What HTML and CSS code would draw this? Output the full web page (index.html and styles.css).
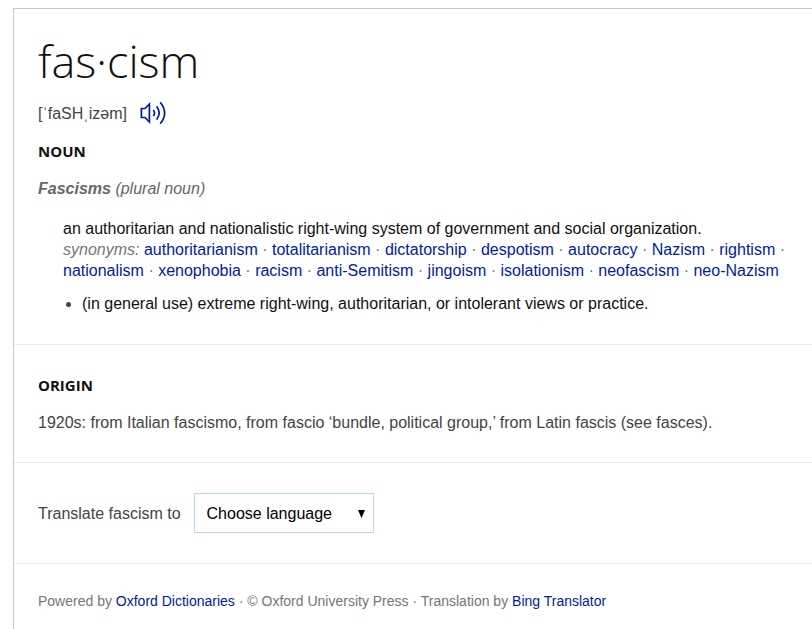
FILE: index.html
```
<!DOCTYPE html>
<html lang="en">
<head>
  <meta charset="UTF-8">
  <meta name="viewport" content="width=device-width, initial-scale=1.0">
  <title>fascism - definition</title>
  <link rel="stylesheet" href="styles.css">
</head>
<body>
  <main class="card">
    <section class="entry">
      <h1 class="word">fas·cism</h1>
      <div class="pronunciation">
        <span>[ˈfaSHˌizəm]</span>
        <button type="button" class="audio-btn" aria-label="Listen">
          <svg width="26" height="24" viewBox="0 0 26 24" fill="none" stroke="#001ba0" stroke-width="1.7">
            <path d="M1.4 7.5H5L9.4 3V21L5 16.5H1.4Z"/>
            <path d="M13.3 9Q15.7 12 13.3 15"/>
            <path d="M16.6 5.4Q21.8 12 16.6 18.6"/>
            <path d="M20.2 1.2Q29 12 20.2 22.8"/>
          </svg>
        </button>
      </div>
      <h2 class="label">NOUN</h2>
      <p class="forms"><strong>Fascisms</strong> (plural noun)</p>
      <div class="definition">
        <p>an authoritarian and nationalistic right-wing system of government and social organization.</p>
        <p class="synonyms"><em>synonyms:</em> <a href="#">authoritarianism</a> · <a href="#">totalitarianism</a> · <a href="#">dictatorship</a> · <a href="#">despotism</a> · <a href="#">autocracy</a> · <a href="#">Nazism</a> · <a href="#">rightism</a> · <a href="#">nationalism</a> · <a href="#">xenophobia</a> · <a href="#">racism</a> · <a href="#">anti-Semitism</a> · <a href="#">jingoism</a> · <a href="#">isolationism</a> · <a href="#">neofascism</a> · <a href="#">neo-Nazism</a></p>
        <ul class="senses">
          <li>(in general use) extreme right-wing, authoritarian, or intolerant views or practice.</li>
        </ul>
      </div>
    </section>

    <section class="origin">
      <h2 class="label">ORIGIN</h2>
      <p>1920s: from Italian fascismo, from fascio ‘bundle, political group,’ from Latin fascis (see fasces).</p>
    </section>

    <section class="translate">
      <label for="language">Translate fascism to</label>
      <div class="select-wrap">
        <select id="language">
          <option>Choose language</option>
        </select>
        <svg class="arrow" width="7" height="8" viewBox="0 0 7 8"><path d="M0 0H7L3.5 8Z"/></svg>
      </div>
    </section>

    <footer class="credits">
      Powered by <a href="#">Oxford Dictionaries</a> · © Oxford University Press · Translation by <a href="#">Bing Translator</a>
    </footer>
  </main>
</body>
</html>
```
FILE: styles.css
```
body {
  margin: 8px 0 0 13px;
  background: #fff;
  color: #444;
  font-family: "Liberation Sans", Arial, sans-serif;
  font-size: 16px;
  line-height: 21px;
}

h1, h2, p, ul {
  margin: 0;
}

a {
  color: #001ba0;
  text-decoration: none;
}

a:hover {
  text-decoration: underline;
}

.card {
  border-top: 1px solid #c8c8c8;
  border-left: 1px solid #c8c8c8;
}

.entry, .origin, .translate {
  padding: 30px 20px 30px 24px;
  border-bottom: 1px solid #ececec;
}

.entry {
  padding-top: 24px;
}

.word {
  color: #111;
  font-family: "Open Sans", sans-serif;
  font-size: 45px;
  font-weight: 300;
  line-height: 56px;
}

.pronunciation {
  display: flex;
  align-items: center;
  gap: 13px;
  margin-top: 12px;
}

.audio-btn {
  display: flex;
  padding: 0;
  border: none;
  background: none;
  cursor: pointer;
}

.label {
  color: #111;
  font-family: "Open Sans", sans-serif;
  font-size: 15px;
  font-weight: 700;
  line-height: 21px;
}

.pronunciation + .label {
  margin-top: 16px;
}

.forms {
  margin-top: 16px;
  color: #666;
  font-style: italic;
}

.definition {
  margin: 19px 0 0 25px;
  color: #111;
}

.synonyms {
  color: #767676;
}

.senses {
  margin-top: 12px;
  padding-left: 19px;
}

.senses li::marker {
  color: #444;
}

.origin {
  padding-bottom: 29px;
}

.origin p {
  margin-top: 16px;
}

.translate {
  display: flex;
  align-items: center;
  gap: 13px;
}

.select-wrap {
  position: relative;
}

.select-wrap select {
  appearance: none;
  display: block;
  height: 40px;
  padding: 0 40px 0 12px;
  border: 1px solid #bad8ec;
  border-radius: 0;
  background: #fff;
  color: #000;
  font: inherit;
}

/* Dropdown arrow over the select */
.arrow {
  position: absolute;
  top: 17px;
  right: 9px;
  pointer-events: none;
}

.credits {
  padding: 27px 20px 27px 24px;
  color: #767676;
  font-size: 14px;
}
```
